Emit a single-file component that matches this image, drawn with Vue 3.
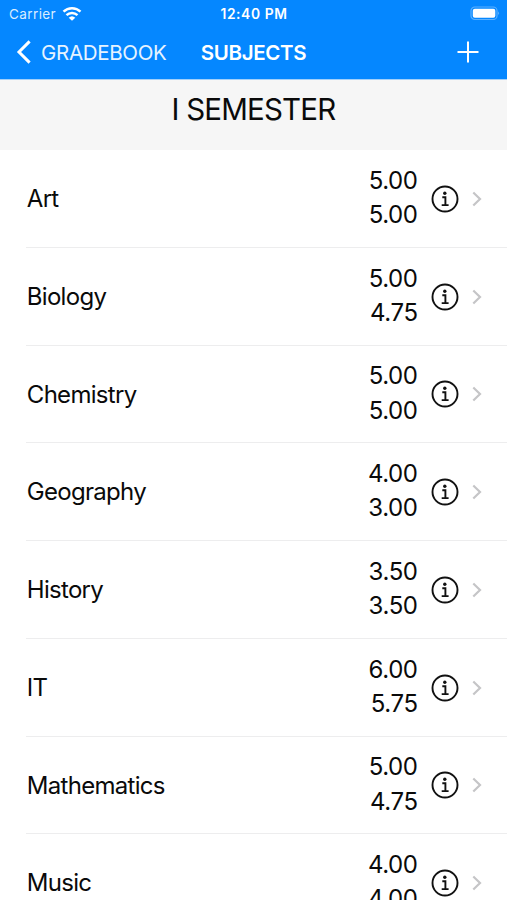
<script setup>
const subjects = [
  { name: 'Art', grades: ['5.00', '5.00'] },
  { name: 'Biology', grades: ['5.00', '4.75'] },
  { name: 'Chemistry', grades: ['5.00', '5.00'] },
  { name: 'Geography', grades: ['4.00', '3.00'] },
  { name: 'History', grades: ['3.50', '3.50'] },
  { name: 'IT', grades: ['6.00', '5.75'] },
  { name: 'Mathematics', grades: ['5.00', '4.75'] },
  { name: 'Music', grades: ['4.00', '4.00'] },
]
</script>

<template>
  <div class="screen">
    <header class="top">
      <div class="status">
        <div class="carrier">
          <span>Carrier</span>
          <svg class="wifi" width="20" height="14" viewBox="0 0 20 14">
            <path d="M1.500 4.700A12.200 12.200 0 0 1 18.500 4.700M4.500 8.200A7.900 7.900 0 0 1 15.500 8.200" fill="none" stroke="#fff" stroke-width="2.500" />
            <path d="M10 13.800L6.700 10.700A4.800 4.800 0 0 1 13.300 10.700Z" fill="#fff" />
          </svg>
        </div>
        <span class="time">12:40 PM</span>
        <svg class="battery" width="31" height="15" viewBox="0 0 31 15">
          <rect x="1" y="1" width="26" height="12.500" rx="3.800" fill="none" stroke="#fff" stroke-opacity=".35" stroke-width="1.200" />
          <rect x="2.800" y="2.800" width="22.500" height="9" rx="2" fill="#fff" />
          <path d="M28.300 5.300q1.700 1.900 0 3.900z" fill="#fff" fill-opacity=".5" />
        </svg>
      </div>
      <nav class="nav">
        <div class="back">
          <svg width="16" height="26" viewBox="0 0 16 26">
            <path d="M14.600 2.400L4 13L14.600 23.600" fill="none" stroke="#fff" stroke-width="3" />
          </svg>
          <span>GRADEBOOK</span>
        </div>
        <h1>SUBJECTS</h1>
        <svg class="add" width="22" height="22" viewBox="0 0 22 22">
          <path d="M11 .5V21.500M.5 11H21.500" stroke="#fff" stroke-width="2" />
        </svg>
      </nav>
    </header>
    <h2 class="semester">I SEMESTER</h2>
    <ul class="list">
      <li v-for="s in subjects" :key="s.name" class="row">
        <span class="name">{{ s.name }}</span>
        <div class="grades">
          <span v-for="(g, i) in s.grades" :key="i">{{ g }}</span>
        </div>
        <svg class="info" width="28" height="28" viewBox="0 0 28 28">
          <circle cx="14" cy="14" r="12.500" fill="none" stroke="#111" stroke-width="1.900" />
          <circle cx="13.800" cy="8.300" r="1.700" fill="#111" />
          <path d="M11.300 12.200H14.400V20M10.700 20.100H17.600" fill="none" stroke="#111" stroke-width="1.900" />
        </svg>
        <svg class="chevron" width="10" height="16" viewBox="0 0 10 16">
          <path d="M1.300 1.500L8 8L1.300 14.500" fill="none" stroke="#c5c5c7" stroke-width="2.200" />
        </svg>
      </li>
    </ul>
  </div>
</template>

<style>
body {
  margin: 0;
  overflow: hidden;
}
</style>

<style scoped>
.screen {
  width: 507px;
  height: 900px;
  overflow: hidden;
  background: #fff;
  color: #0a0a0a;
  font-family: Inter, "Liberation Sans", sans-serif;
}
.top {
  box-sizing: border-box;
  height: 80px;
  background: #0587ff;
  border-bottom: 1px solid #a3d0fa;
  color: #fff;
}
.status {
  display: grid;
  grid-template-columns: 1fr auto 1fr;
  align-items: center;
  height: 27px;
  padding: 0 6px 0 9px;
  font-size: 13.5px;
}
.carrier {
  display: flex;
  align-items: center;
  gap: 5.5px;
  color: #d9edff;
  letter-spacing: 0.4px;
}
.time {
  font-weight: 600;
  font-size: 13.8px;
  letter-spacing: 0.6px;
  margin-right: 2px;
}
.battery {
  justify-self: end;
}
.nav {
  display: grid;
  grid-template-columns: 1fr auto 1fr;
  align-items: center;
  height: 50px;
  padding: 0 15px;
}
.back {
  display: flex;
  align-items: center;
  gap: 10px;
  font-size: 20.5px;
  letter-spacing: -0.3px;
  color: #e6f3ff;
}
h1 {
  margin: 0;
  font-size: 20.5px;
  font-weight: 600;
  letter-spacing: -0.35px;
}
.add {
  justify-self: end;
  margin-right: 13px;
}
.semester {
  box-sizing: border-box;
  height: 70px;
  margin: 0;
  background: #f6f6f6;
  font-size: 29.5px;
  font-weight: 400;
  letter-spacing: -0.8px;
  line-height: 59px;
  text-align: center;
}
.list {
  margin: 0;
  padding: 0;
  list-style: none;
}
.row {
  box-sizing: border-box;
  display: flex;
  align-items: center;
  height: 97.75px;
  margin-left: 26px;
  padding: 1px 25px 0 0;
  border-bottom: 1.5px solid #ededee;
  font-size: 24px;
}
.name {
  flex: 1;
  padding: 0 0 0.6px 0.8px;
  letter-spacing: -0.7px;
}
.grades {
  display: flex;
  flex-direction: column;
  align-items: flex-end;
  margin-right: 13.4px;
  padding-bottom: 1.4px;
  line-height: 34.2px;
  letter-spacing: -0.4px;
}
.info {
  margin-right: 13px;
}
</style>
